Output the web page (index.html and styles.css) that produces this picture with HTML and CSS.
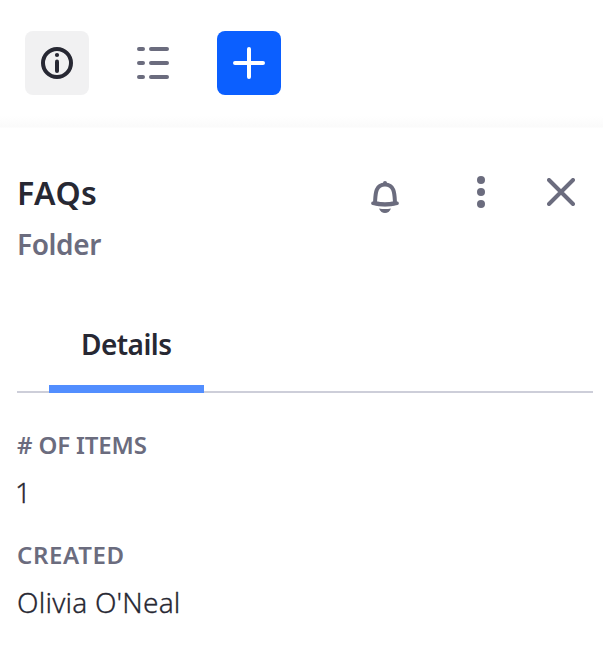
FILE: index.html
```html
<!DOCTYPE html>
<html lang="en">
<head>
<meta charset="utf-8">
<title>FAQs</title>
<link rel="stylesheet" href="styles.css">
</head>
<body>
<nav class="toolbar">
  <button class="tool tool-active" aria-label="Info">
    <svg width="32" height="32" viewBox="0 0 32 32"><circle cx="16" cy="16" r="14" fill="none" stroke="currentColor" stroke-width="4"/><circle cx="16" cy="8" r="2.1" fill="currentColor"/><path d="M16 14.500v9.500" stroke="currentColor" stroke-width="4" stroke-linecap="round"/></svg>
  </button>
  <button class="tool" aria-label="List view">
    <svg width="32" height="32" viewBox="0 0 32 32" fill="none" stroke="currentColor" stroke-width="4" stroke-linecap="round"><path d="M2 2h4M14 2h16M2 16h4M14 16h16M2 30h4M14 30h16"/></svg>
  </button>
  <button class="tool tool-primary" aria-label="New">
    <svg width="32" height="32" viewBox="0 0 32 32" fill="none" stroke="currentColor" stroke-width="4" stroke-linecap="round"><path d="M16 2v28M2 16h28"/></svg>
  </button>
</nav>
<main class="panel">
  <header class="heading">
    <div class="titles">
      <h1 class="title">FAQs</h1>
      <p class="subtitle">Folder</p>
    </div>
    <div class="actions">
      <svg class="bell" width="28" height="32" viewBox="0 0 28 32"><path d="M4 22C4.500 14 4 3.500 14 3.500S23.500 14 24 22Q14 24.500 4 22Z" fill="none" stroke="currentColor" stroke-width="4" stroke-linejoin="round"/><path d="M2 22.300Q14 25.300 26 22.300" fill="none" stroke="currentColor" stroke-width="3.600" stroke-linecap="round"/><circle cx="14" cy="2" r="2" fill="currentColor"/><path d="M8 27.500Q14 28.500 20 27.500Q18 32 14 32T8 27.500Z" fill="currentColor"/></svg>
      <svg class="dots" width="8" height="32" viewBox="0 0 8 32" fill="currentColor"><circle cx="4" cy="4" r="4"/><circle cx="4" cy="16" r="4"/><circle cx="4" cy="28" r="4"/></svg>
      <svg width="28" height="28" viewBox="0 0 28 28" fill="none" stroke="currentColor" stroke-width="4" stroke-linecap="round"><path d="M2 2l24 24M26 2L2 26"/></svg>
    </div>
  </header>
  <div class="tabs"><div class="tab"><span class="tab-label">Details</span></div></div>
  <dl class="details">
    <dt class="label label-items"># OF ITEMS</dt>
    <dd class="value value-count">1</dd>
    <dt class="label label-created">CREATED</dt>
    <dd class="value value-name">Olivia O'Neal</dd>
  </dl>
</main>
</body>
</html>
```
FILE: styles.css
```css
* { box-sizing: border-box; }
body { margin: 0; background: #fff; color: #272833; font-family: "Noto Sans", sans-serif; overflow: hidden; }
svg { display: block; }
.toolbar { display: flex; gap: 32px; height: 128px; padding: 31px 25px; background: linear-gradient(#fff 116px, #fafafa 127px, #fff 128px); }
.tool { display: flex; align-items: center; justify-content: center; width: 64px; height: 64px; padding: 0; border: 0; border-radius: 8px; background: none; color: #6b6c7e; }
.tool-active { background: #f1f1f2; color: #272833; }
.tool-primary { background: #0b5fff; color: #fff; }
.panel { padding: 43px 10px 0 17px; }
.heading { display: flex; justify-content: space-between; height: 137px; }
.title { margin: 0; font-size: 32px; line-height: 44px; font-weight: 600; letter-spacing: 0.5px; }
.subtitle { margin: 9px 0 0; font-size: 28px; line-height: 40px; font-weight: 600; letter-spacing: -0.4px; color: #6b6c7e; }
.actions { display: flex; align-items: flex-start; padding: 7px 18px 0 0; color: #6b6c7e; }
.bell { margin: 3px 78px 0 0; }
.dots { margin: -2px 62px 0 0; }
.tabs { display: flex; height: 85px; padding-left: 32px; border-bottom: 2px solid #cdced9; }
.tab { width: 155px; height: 85px; padding-left: 32px; border-bottom: 8px solid #528eff; font-size: 28px; line-height: 72px; font-weight: 600; letter-spacing: -0.55px; }
.details { margin: 34px 0 0; }
.label { font-size: 24px; line-height: 36px; font-weight: 600; color: #6b6c7e; }
.label-items { letter-spacing: -0.15px; }
.label-created { letter-spacing: 0.65px; }
.value { margin: 8px 0 24px; font-size: 28px; line-height: 42px; font-weight: 300; -webkit-text-stroke: 0.3px currentColor; }
.value-count { text-indent: -2px; }
.value-name { letter-spacing: 0.2px; }
```
